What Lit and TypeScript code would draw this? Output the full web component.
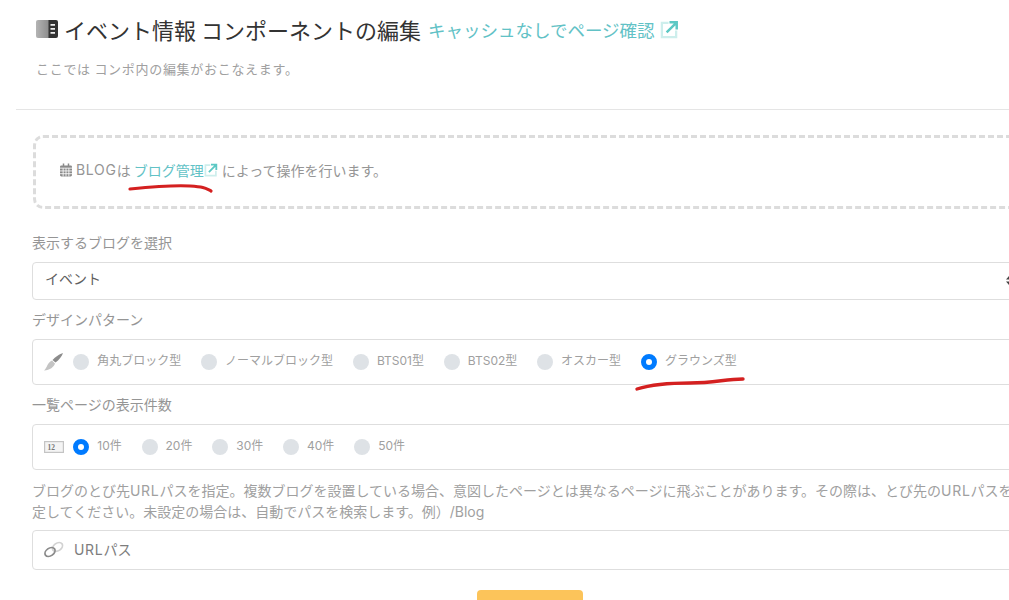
import { LitElement, html, css, svg } from "lit";
import { customElement } from "lit/decorators.js";

const ext = (size: number) => html`<svg class="ext" width=${size} height=${size} viewBox="0 0 20 20" fill="none">
  <path d="M9 3H2v15h15v-7" stroke="#cdeeec" stroke-width="2.4"/>
  <path d="M7 13 16.5 3.5M10 2.4h7.6V10" stroke="#5cc8c4" stroke-width="2.6"/>
</svg>`;

const design = [
  ["角丸ブロック型", false],
  ["ノーマルブロック型", false],
  ["BTS01型", false],
  ["BTS02型", false],
  ["オスカー型", false],
  ["グラウンズ型", true],
] as const;
const counts = [
  ["10件", true],
  ["20件", false],
  ["30件", false],
  ["40件", false],
  ["50件", false],
] as const;

@customElement("app-root")
export class AppRoot extends LitElement {
  static styles = css`
    :host {
      display: block;
      position: relative;
      width: 1009px;
      height: 600px;
      overflow: hidden;
      background: #fff;
      font-family: "Inter", "Noto Sans CJK JP", sans-serif;
      color: #959595;
    }
    .head {
      padding: 13px 0 0 36px;
      height: 109px;
      box-sizing: border-box;
    }
    .title {
      display: flex;
      align-items: center;
      height: 32px;
      font-size: 22px;
      color: #333;
      white-space: nowrap;
      font-family: "Noto Sans CJK JP", sans-serif;
    }
    .book { margin-right: 6px; }
    .cache {
      display: flex;
      align-items: center;
      gap: 5px;
      margin-left: 7px;
      font-size: 17.5px;
      color: #62c2c6;
    }
    .sub {
      margin-top: 14px;
      font-size: 13px;
      letter-spacing: 0.7px;
      line-height: 20px;
      color: #a0a0a0;
      font-family: "Noto Sans CJK JP", sans-serif;
      white-space: nowrap;
    }
    .rule {
      margin: 0 0 0 16px;
      border-top: 1px solid #e5e5e5;
    }
    .body {
      width: 1024px;
      box-sizing: border-box;
      padding: 25px 0 0 32px;
    }
    .notice {
      box-sizing: border-box;
      height: 74px;
      margin-left: 1px;
      display: flex;
      align-items: center;
      padding: 0 0 5px 24px;
      border: 3px dashed #dcdcdc;
      border-radius: 10px;
      font-size: 14px;
      white-space: nowrap;
    }
    .notice svg.cal { margin-right: 4px; }
    .notice a {
      display: inline-flex;
      align-items: center;
      color: #62c2c6;
      margin: 0 4px 0 3px;
    }
    .wide { letter-spacing: 0.7px; }
    .label {
      display: block;
      font-size: 14px;
      line-height: 20px;
      color: #959595;
      white-space: nowrap;
    }
    .l1 { margin-top: 24px; }
    .l2 { margin-top: 10px; }
    .l3 { margin-top: 10px; }
    .field {
      box-sizing: border-box;
      border: 1px solid #dedede;
      border-radius: 4px;
      margin-top: 9px;
      display: flex;
      align-items: center;
      white-space: nowrap;
    }
    .select {
      height: 38px;
      margin-top: 9px;
      padding: 0 0 6px 12px;
      font-size: 14px;
      color: #5f5f5f;
      position: relative;
    }
    .arrows {
      position: absolute;
      right: 11px;
      top: 13px;
    }
    .radios {
      height: 46px;
      padding-left: 11px;
      margin-top: 9px;
      font-size: 12px;
      color: #a0a0a0;
      gap: 19.8px;
    }
    .radios.count { margin-top: 9px; }
    .ic { flex: none; margin-right: -10.5px; }
    .radio {
      display: flex;
      align-items: center;
      gap: 8px;
    }
    .radio span {
      position: relative;
      top: -3px;
    }
    .dot {
      flex: none;
      box-sizing: border-box;
      width: 16px;
      height: 16px;
      border-radius: 50%;
      background: #dee2e6;
    }
    .dot.on {
      background: #007bff;
      border: 5px solid #007bff;
      position: relative;
    }
    .dot.on::after {
      content: "";
      display: block;
      width: 6px;
      height: 6px;
      border-radius: 50%;
      background: #fff;
    }
    .help {
      margin-top: 10px;
      font-size: 14px;
      line-height: 21px;
      color: #a0a0a0;
      width: 1000px;
    }
    .input {
      height: 40px;
      margin-top: 8px;
      padding: 0 0 2px 10px;
      font-size: 14px;
      color: #7d7d7d;
    }
    .input svg { margin-right: 9px; }
    .btn {
      display: block;
      width: 106px;
      height: 30px;
      margin: 20px 0 0 445px;
      border-radius: 4px;
      background: #fcc45a;
    }
    .ink {
      position: absolute;
      left: 0;
      top: 0;
      pointer-events: none;
    }
  `;

  render() {
    return html`
      <div class="head">
        <div class="title">
          <svg class="book" width="22" height="20" viewBox="0 0 22 20">
            <defs><linearGradient id="g" x1="0" x2="1" y1="0" y2="0">
              <stop offset="0" stop-color="#b4b4b4"/><stop offset="1" stop-color="#8c8c8c"/>
            </linearGradient></defs>
            <path d="M2 1h11v18H2a2 2 0 0 1-2-2V3a2 2 0 0 1 2-2z" fill="url(#g)"/>
            <path d="M12.500 1H20a2 2 0 0 1 2 2v14a2 2 0 0 1-2 2h-7.500z" fill="#333"/>
            <path d="M14.500 5h4.500v1.800h-4.500zM14.500 9h4.500v1.800h-4.500zM14.500 13h4.500v1.800h-4.500z" fill="#eee"/>
          </svg>
          イベント情報 コンポーネントの編集
          <span class="cache">キャッシュなしでページ確認 ${ext(19)}</span>
        </div>
        <div class="sub">ここでは コンポ内の編集がおこなえます。</div>
      </div>
      <div class="rule"></div>
      <div class="body">
        <div class="notice">
          <svg class="cal" width="12" height="14" viewBox="0 0 13 14">
            <path fill="#8a8a8a" d="M3 0h1.600v2H8.400V0H10v2h1.500A1.500 1.500 0 0 1 13 3.500v9a1.500 1.500 0 0 1-1.500 1.500h-10A1.500 1.500 0 0 1 0 12.500v-9A1.500 1.500 0 0 1 1.500 2H3z"/>
            <path stroke="#fff" stroke-width=".9" d="M0 5h13M0 8h13M0 11h13M3.400 5v9M6.500 5v9M9.600 5v9"/>
          </svg>
          <span class="wide">BLOG</span>は <a>ブログ管理${ext(14)}</a> によって操作を行います。
        </div>
        <div class="label l1">表示するブログを選択</div>
        <div class="field select">
          イベント
          <svg class="arrows" width="6" height="9" viewBox="0 0 6 9">
            <path d="M3 0 6 3.500H0zM3 9 0 5.500h6z" fill="#444"/>
          </svg>
        </div>
        <div class="label l2">デザインパターン</div>
        <div class="field radios">
          <svg class="ic" width="20" height="18" viewBox="0 0 20 18">
            <path d="M19 0c-1 3-4 7-7.500 9.500L8.500 7C11 4 16 1 19 0z" fill="#8c8c8c"/>
            <path d="M8 7.500 11 10.500C10 14 6 17 0 17.500 3 15 3 10 8 7.500z" fill="#c4c4c4"/>
          </svg>
          ${design.map(
            ([t, on]) => html`<div class="radio">
              <i class="dot ${on ? "on" : ""}"></i><span>${t}</span>
            </div>`
          )}
        </div>
        <div class="label l3">一覧ページの表示件数</div>
        <div class="field radios count">
          <svg class="ic" width="20" height="12" viewBox="0 0 20 12">
            <rect x=".6" y=".6" width="18.800" height="10.800" fill="#f4f4f4" stroke="#c4c4c4" stroke-width="1.200"/>
            <text x="3.500" y="9" font-size="7.500" font-weight="700" fill="#777" font-family="Liberation Serif">12</text>
          </svg>
          ${counts.map(
            ([t, on]) => html`<div class="radio">
              <i class="dot ${on ? "on" : ""}"></i><span>${t}</span>
            </div>`
          )}
        </div>
        <div class="help">ブログのとび先<span class="wide">URL</span>パスを指定。複数ブログを設置している場合、意図したページとは異なるページに飛ぶことがあります。その際は、とび先の<span class="wide">URL</span>パスを指定してください。未設定の場合は、自動でパスを検索します。例）/Blog</div>
        <div class="field input">
          <svg width="22" height="17" viewBox="0 0 22 17" fill="none">
            <ellipse cx="14.500" cy="6" rx="5.500" ry="3.800" transform="rotate(-35 14.500 6)" stroke="#d2d2d2" stroke-width="1.800"/>
            <ellipse cx="7" cy="11" rx="5.500" ry="3.800" transform="rotate(-35 7 11)" stroke="#8a8a8a" stroke-width="1.800"/>
          </svg>
          <span class="wide">URL</span>パス
        </div>
        <div class="btn"></div>
      </div>
      <svg class="ink" width="1009" height="600" fill="none" stroke="#d42020" stroke-linecap="round">
        ${svg`<path d="M130 189C150 187 175 185 190 186S205 188 211 191" stroke-width="3.200"/>
        <path d="M637 389C650 385 665 383 690 383S725 379 743 379" stroke-width="3.400"/>`}
      </svg>
    `;
  }
}
